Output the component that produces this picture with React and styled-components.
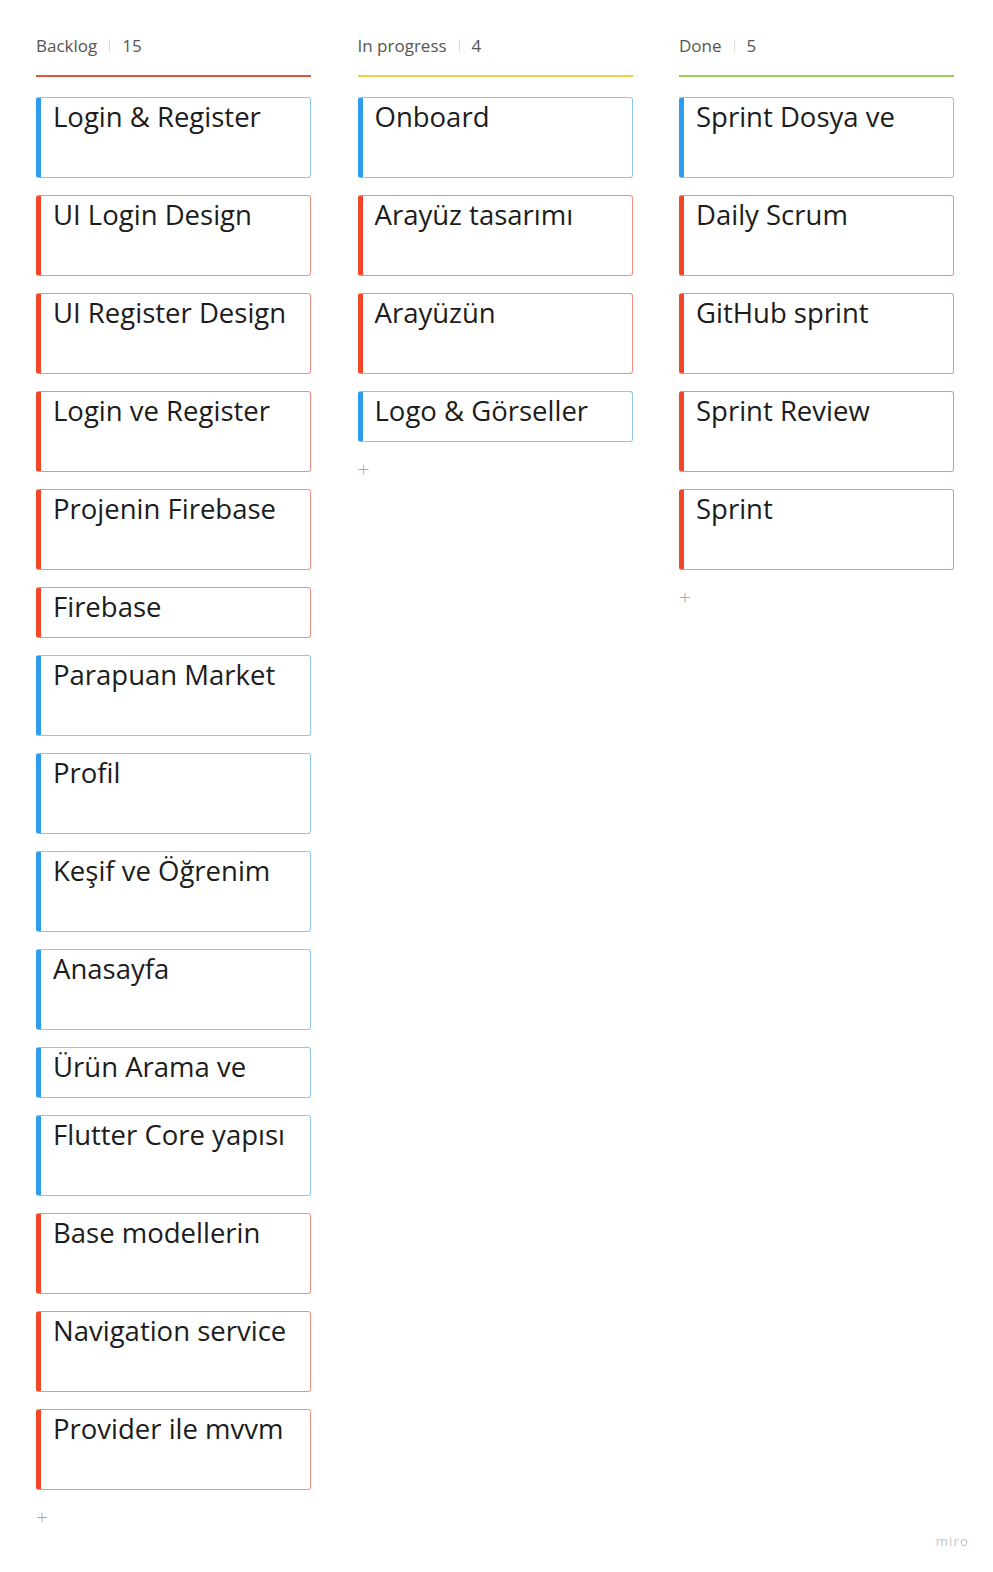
import styled, { createGlobalStyle } from "styled-components";

const GlobalStyle = createGlobalStyle`
  html, body {
    margin: 0;
    padding: 0;
    background: #ffffff;
  }
  body {
    font-family: "Open Sans", "Noto Sans", sans-serif;
  }
`;

const Board = styled.div`
  position: relative;
  min-height: 1572px;
  box-sizing: border-box;
  padding: 35px 0 0 36px;
  display: flex;
  align-items: flex-start;
  gap: 46.5px;
`;

const Column = styled.div`
  width: 275px;
  display: flex;
  flex-direction: column;
`;

const Header = styled.div`
  display: flex;
  align-items: center;
  height: 20px;
  font-size: 17px;
  color: #555555;
  padding-bottom: 20px;
  border-bottom: 2px solid ${(p) => p.line};
  margin-bottom: 20px;
`;

const Divider = styled.span`
  width: 1px;
  height: 13px;
  background: #dcdcdc;
  margin: 0 12px;
`;

const CardList = styled.div`
  display: flex;
  flex-direction: column;
  gap: 17px;
`;

const Card = styled.div`
  box-sizing: border-box;
  height: ${(p) => (p.short ? 51 : 81)}px;
  border: 1px solid ${(p) => (p.tone === "blue" ? "#8ec5f1" : "#f2917f")};
  border-left: 5px solid ${(p) => (p.tone === "blue" ? "#2d9bf0" : "#f24726")};
  border-radius: 3px;
  padding: 0 10px 0 12px;
  font-size: 27.5px;
  line-height: 37px;
  color: #1c1c1c;
  white-space: nowrap;
  overflow: hidden;
`;

const AddButton = styled.div`
  margin-top: 17px;
  font-size: 21px;
  line-height: 20px;
  font-weight: 300;
  color: #a8a8a8;
`;

const Watermark = styled.div`
  position: absolute;
  right: 24px;
  bottom: 22px;
  font-size: 13px;
  letter-spacing: 1.2px;
  color: #c4c4c4;
`;

const columns = [
  {
    title: "Backlog",
    line: "#e0573f",
    cards: [
      ["Login & Register", "blue"],
      ["UI Login Design", "red"],
      ["UI Register Design", "red"],
      ["Login ve Register", "red"],
      ["Projenin Firebase", "red"],
      ["Firebase", "red", true],
      ["Parapuan Market", "blue"],
      ["Profil", "blue"],
      ["Keşif ve Öğrenim", "blue"],
      ["Anasayfa", "blue"],
      ["Ürün Arama ve", "blue", true],
      ["Flutter Core yapısı", "blue"],
      ["Base modellerin", "red"],
      ["Navigation service", "red"],
      ["Provider ile mvvm", "red"],
    ],
  },
  {
    title: "In progress",
    line: "#f1cf48",
    cards: [
      ["Onboard", "blue"],
      ["Arayüz tasarımı", "red"],
      ["Arayüzün", "red"],
      ["Logo & Görseller", "blue", true],
    ],
  },
  {
    title: "Done",
    line: "#94cf5c",
    cards: [
      ["Sprint Dosya ve", "blue"],
      ["Daily Scrum", "red"],
      ["GitHub sprint", "red"],
      ["Sprint Review", "red"],
      ["Sprint", "red"],
    ],
  },
];

export default function App() {
  return (
    <>
      <GlobalStyle />
      <Board>
        {columns.map((col) => (
          <Column key={col.title}>
            <Header line={col.line}>
              {col.title}
              <Divider />
              {col.cards.length}
            </Header>
            <CardList>
              {col.cards.map(([text, tone, short]) => (
                <Card key={text} tone={tone} short={short}>
                  {text}
                </Card>
              ))}
            </CardList>
            <AddButton>+</AddButton>
          </Column>
        ))}
        <Watermark>miro</Watermark>
      </Board>
    </>
  );
}
